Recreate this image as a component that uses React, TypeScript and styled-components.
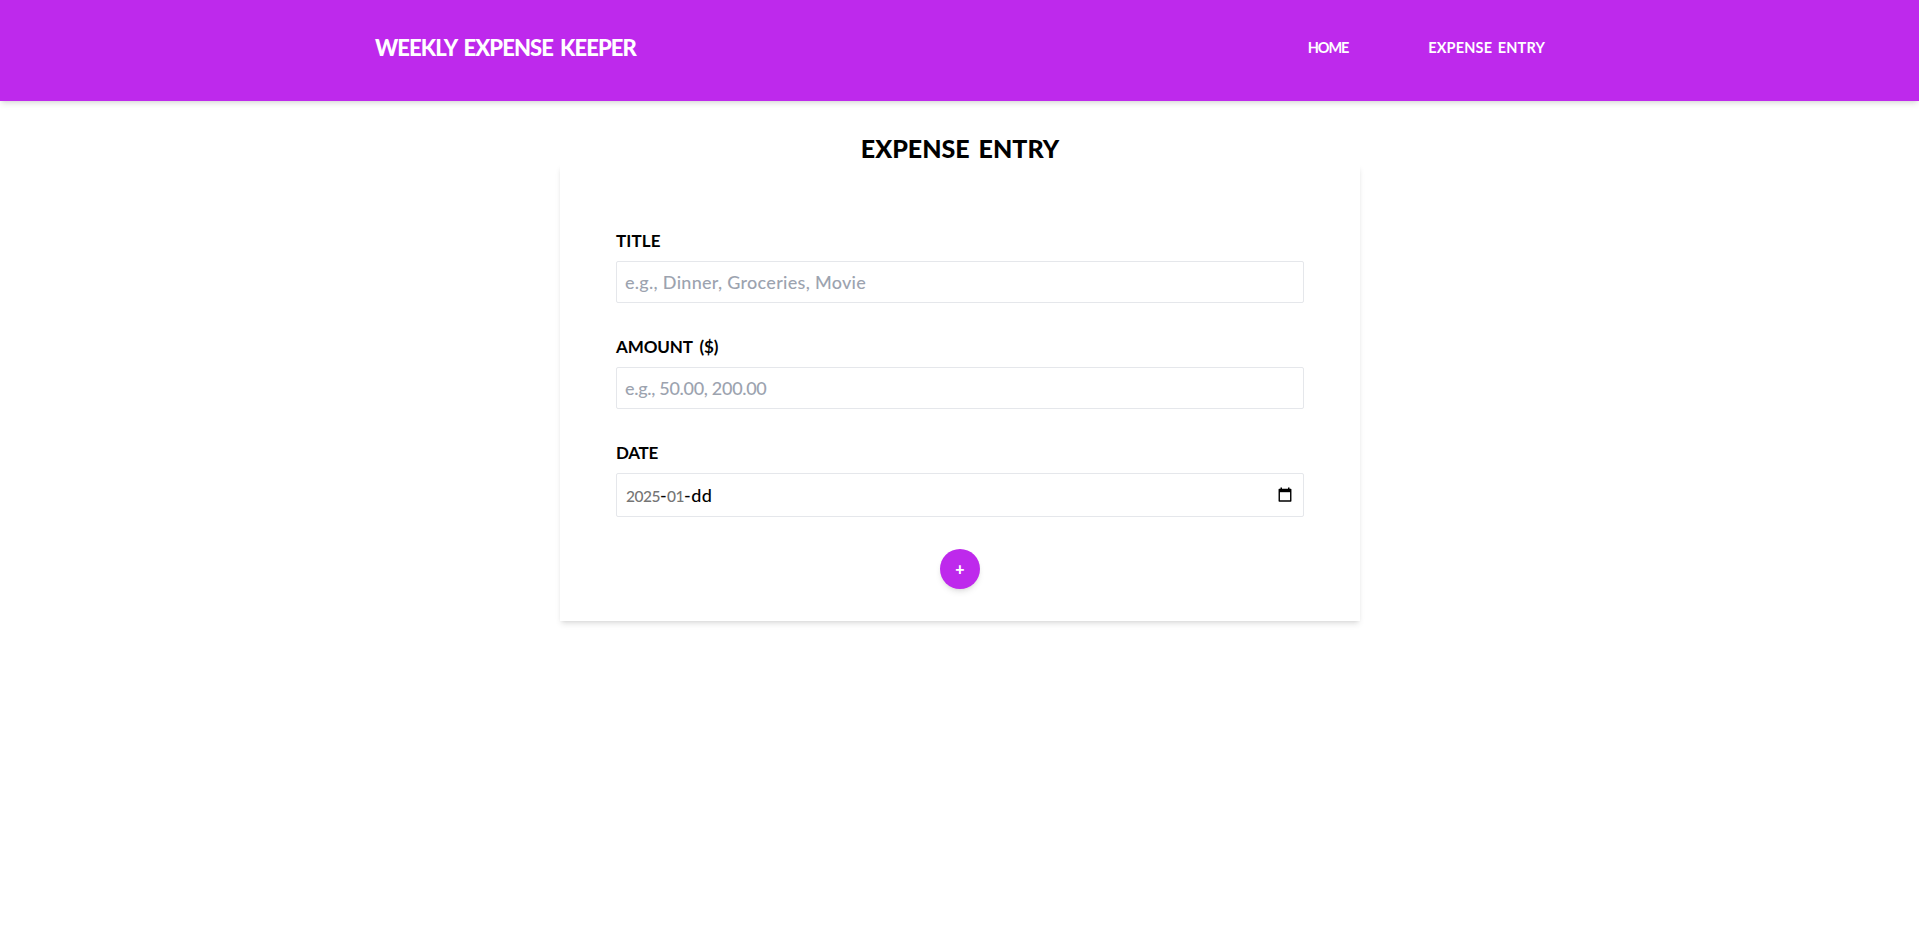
import React from "react";
import styled, { createGlobalStyle } from "styled-components";

const purple = "#be29ec";

const GlobalStyle = createGlobalStyle`
  *, *::before, *::after { box-sizing: border-box; }
  body {
    margin: 0;
    background: #fff;
    color: #000;
    font-family: Lato, "Open Sans", sans-serif;
  }
`;

const Page = styled.div`
  min-height: 100vh;
  background: #fff;
`;

const Header = styled.header`
  height: 101px;
  padding: 31px 374px 0 375px;
  display: flex;
  justify-content: space-between;
  align-items: flex-start;
  background: ${purple};
  color: #fff;
  box-shadow: 0 4px 6px -1px rgba(0, 0, 0, 0.1), 0 2px 4px -2px rgba(0, 0, 0, 0.1);
`;

const Brand = styled.h1`
  margin: 0;
  font-size: 22px;
  line-height: 33px;
  font-weight: 900;
  letter-spacing: -0.9px;
  word-spacing: 2.8px;
  white-space: nowrap;
`;

const Nav = styled.nav`
  display: flex;
  gap: 80px;
  line-height: 33px;
`;

const NavLink = styled.a<{ $spacing: number }>`
  color: #fff;
  font-size: 14.5px;
  font-weight: 700;
  letter-spacing: ${(p) => p.$spacing}px;
  word-spacing: 2px;
  white-space: nowrap;
`;

const Main = styled.main`
  display: flex;
  flex-direction: column;
  align-items: center;
  padding: 31px 0 0 1px;
`;

const Heading = styled.h2`
  position: relative;
  width: 820px;
  margin: 0;
  text-align: center;
  background: #fff;
  font-size: 25px;
  line-height: 32px;
  font-weight: 900;
  letter-spacing: 0;
  word-spacing: 3px;
`;

const Card = styled.form`
  display: flex;
  flex-direction: column;
  width: 800px;
  height: 457px;
  padding: 64px 56px 32px;
  background: #fff;
  box-shadow: 0 4px 6px -1px rgba(0, 0, 0, 0.1), 0 2px 4px -2px rgba(0, 0, 0, 0.1);
`;

const Field = styled.div`
  display: flex;
  flex-direction: column;
  flex: none;
  height: 106px;
`;

const Label = styled.label<{ $spacing: number }>`
  height: 33px;
  line-height: 26px;
  font-size: 17px;
  font-weight: 700;
  letter-spacing: ${(p) => p.$spacing}px;
  word-spacing: 3px;
`;

const Input = styled.input<{ $spacing: number }>`
  height: 42px;
  padding: 0 8px;
  border: 1px solid #e5e7eb;
  border-radius: 2px;
  background: #fff;
  font: 500 18px Lato, "Open Sans", sans-serif;
  letter-spacing: ${(p) => p.$spacing}px;
  outline: none;
  &::placeholder { color: #9ca3af; opacity: 1; }
`;

const DateBox = styled.div`
  display: flex;
  align-items: center;
  justify-content: space-between;
  height: 44px;
  padding: 0 11px 0 9px;
  border: 1px solid #e5e7eb;
  border-radius: 2px;
`;

const DateValue = styled.span`
  font-size: 18px;
  font-weight: 500;
  letter-spacing: 0.4px;
`;

const DatePart = styled.span`
  color: #757575;
  font-size: 15.5px;
  letter-spacing: -0.5px;
`;

const AddButton = styled.button`
  flex: none;
  align-self: center;
  display: grid;
  place-items: center;
  width: 40px;
  height: 40px;
  margin-top: 3px;
  padding: 0;
  border: 0;
  border-radius: 50%;
  background: ${purple};
  color: #fff;
  font: 900 16px/20px Lato, "Open Sans", sans-serif;
  box-shadow: 0 4px 6px -1px rgba(0, 0, 0, 0.1), 0 2px 4px -2px rgba(0, 0, 0, 0.1);
`;

const CalendarIcon = () => (
  <svg width="14" height="16" viewBox="0 0 14 16" aria-hidden="true">
    <path d="M2.5 0.5h1.5v2h-1.5zM10 0.5h1.5v2h-1.5z" fill="#000" />
    <path d="M1.25 2.5h11.5v11.5h-11.5z" fill="none" stroke="#000" strokeWidth="1.4" strokeLinejoin="round" />
    <path d="M1 2h12v3.2H1z" fill="#000" />
  </svg>
);

export default function App() {
  return (
    <Page>
      <GlobalStyle />
      <Header>
        <Brand>WEEKLY EXPENSE KEEPER</Brand>
        <Nav>
          <NavLink $spacing={-1.1}>HOME</NavLink>
          <NavLink $spacing={0.15}>EXPENSE ENTRY</NavLink>
        </Nav>
      </Header>
      <Main>
        <Heading>EXPENSE ENTRY</Heading>
        <Card>
          <Field>
            <Label $spacing={0.1}>TITLE</Label>
            <Input $spacing={0.29} placeholder="e.g., Dinner, Groceries, Movie" />
          </Field>
          <Field>
            <Label $spacing={-0.1}>AMOUNT ($)</Label>
            <Input $spacing={-0.3} placeholder="e.g., 50.00, 200.00" />
          </Field>
          <Field>
            <Label $spacing={-0.3}>DATE</Label>
            <DateBox>
              <DateValue>
                <DatePart>2025</DatePart>-<DatePart>01</DatePart>-dd
              </DateValue>
              <CalendarIcon />
            </DateBox>
          </Field>
          <AddButton type="button">+</AddButton>
        </Card>
      </Main>
    </Page>
  );
}
